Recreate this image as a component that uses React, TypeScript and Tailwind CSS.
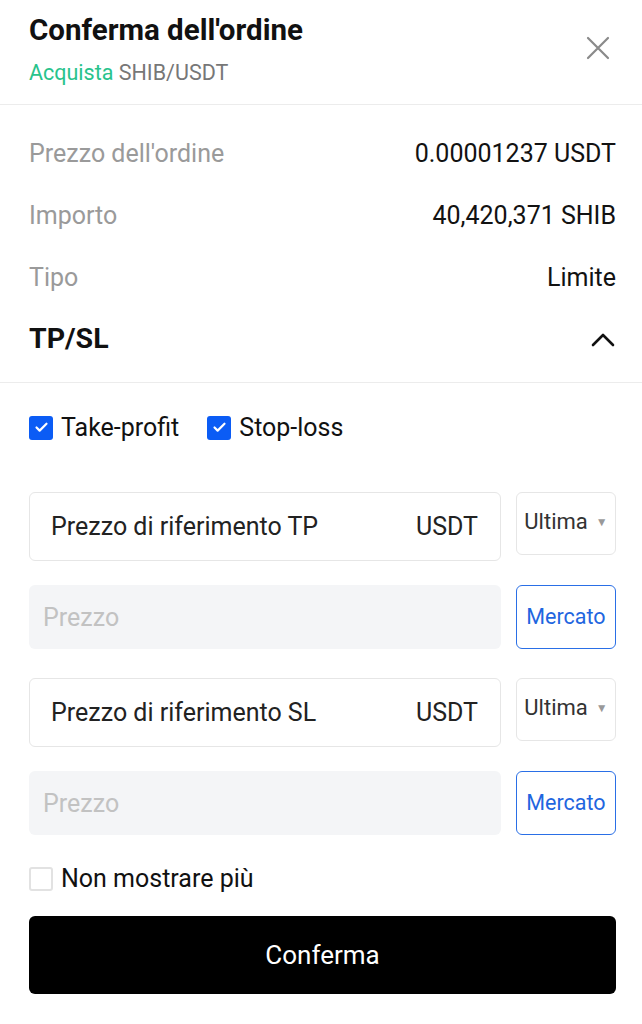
import { Check } from "lucide-react";

function Box({ checked }: { checked: boolean }) {
  return checked ? (
    <span className="flex h-[24px] w-[24px] items-center justify-center rounded-[3px] bg-[#0b5cf5]">
      <Check className="h-[15px] w-[15px] text-white" strokeWidth={3.5} />
    </span>
  ) : (
    <span className="h-[24px] w-[24px] rounded-[3px] border-2 border-[#e2e2e2] bg-white" />
  );
}

function InfoRow({ label, value }: { label: string; value: string }) {
  return (
    <div className="flex h-[62px] items-center justify-between">
      <span className="text-[#9a9a9a]">{label}</span>
      <span className="text-[#121212]">{value}</span>
    </div>
  );
}

function PriceGroup({ kind }: { kind: string }) {
  return (
    <div className="flex flex-col gap-[24px]">
      <div className="flex items-start gap-[15px]">
        <div className="flex h-[69px] flex-1 items-center justify-between rounded-[6px] border border-[#e6e6e6] pl-[21px] pr-[22px] text-[#222]">
          <span>Prezzo di riferimento {kind}</span>
          <span>USDT</span>
        </div>
        <div className="flex h-[63px] w-[100px] items-center justify-center gap-[8px] rounded-[6px] border border-[#e6e6e6] pb-[3px] text-[22px] text-[#333]">
          <span>Ultima</span>
          <span className="text-[12px] text-[#999]">▼</span>
        </div>
      </div>
      <div className="flex gap-[15px]">
        <div className="flex h-[64px] flex-1 items-center rounded-[6px] bg-[#f4f5f7] px-[14px] text-[#c2c2c2]">
          Prezzo
        </div>
        <div className="flex h-[64px] w-[100px] items-center justify-center rounded-[6px] border border-[#2a6fe6] text-[21.5px] text-[#1f66e0]">
          Mercato
        </div>
      </div>
    </div>
  );
}

export default function App() {
  return (
    <div className="min-h-[1024px] w-[642px] bg-white font-['Roboto',sans-serif] text-[25px] leading-none">
      {/* intestazione */}
      <div className="flex h-[105px] items-start justify-between border-b border-[#ececec] px-[29px] pt-[16px]">
        <div>
          <h1 className="text-[29.5px] font-bold text-[#111]">Conferma dell'ordine</h1>
          <p className="mt-[16px] text-[21.5px] text-[#777]">
            <span className="text-[#28c38c]">Acquista</span> SHIB/USDT
          </p>
        </div>
        <svg className="mr-[3px] mt-[20px]" width="24" height="24" viewBox="0 0 24 24" fill="none" stroke="#8a8a8a" strokeWidth="2.2" strokeLinecap="round">
          <path d="M2 2 22 22M22 2 2 22" />
        </svg>
      </div>

      {/* dettagli */}
      <div className="border-b border-[#ececec] px-[26px] pb-[11px] pt-[17px]">
        <div className="pl-[3px]">
          <InfoRow label="Prezzo dell'ordine" value="0.00001237 USDT" />
          <InfoRow label="Importo" value="40,420,371 SHIB" />
          <InfoRow label="Tipo" value="Limite" />
        </div>
        <div className="flex h-[63px] items-center justify-between pl-[3px]">
          <span className="text-[28.5px] font-bold text-[#111]">TP/SL</span>
          <svg className="mr-[1px]" width="24" height="14" viewBox="0 0 24 14" fill="none" stroke="#111" strokeWidth="2.6" strokeLinecap="round" strokeLinejoin="round">
            <path d="M2 12 12 2 22 12" />
          </svg>
        </div>
      </div>

      {/* TP/SL */}
      <div className="px-[29px] pr-[26px] pt-[32px]">
        <div className="flex items-center gap-[28px] text-[#111]">
          <label className="flex items-center gap-[8px]">
            <Box checked />
            Take-profit
          </label>
          <label className="flex items-center gap-[8px]">
            <Box checked />
            Stop-loss
          </label>
        </div>

        <div className="mt-[52px] flex flex-col gap-[29px]">
          <PriceGroup kind="TP" />
          <PriceGroup kind="SL" />
        </div>

        <label className="mt-[31px] flex items-center gap-[8px] text-[#111]">
          <Box checked={false} />
          Non mostrare più
        </label>

        <button className="mt-[25px] flex h-[78px] w-full items-center justify-center rounded-[6px] bg-black text-[26px] text-white">
          Conferma
        </button>
      </div>
    </div>
  );
}
